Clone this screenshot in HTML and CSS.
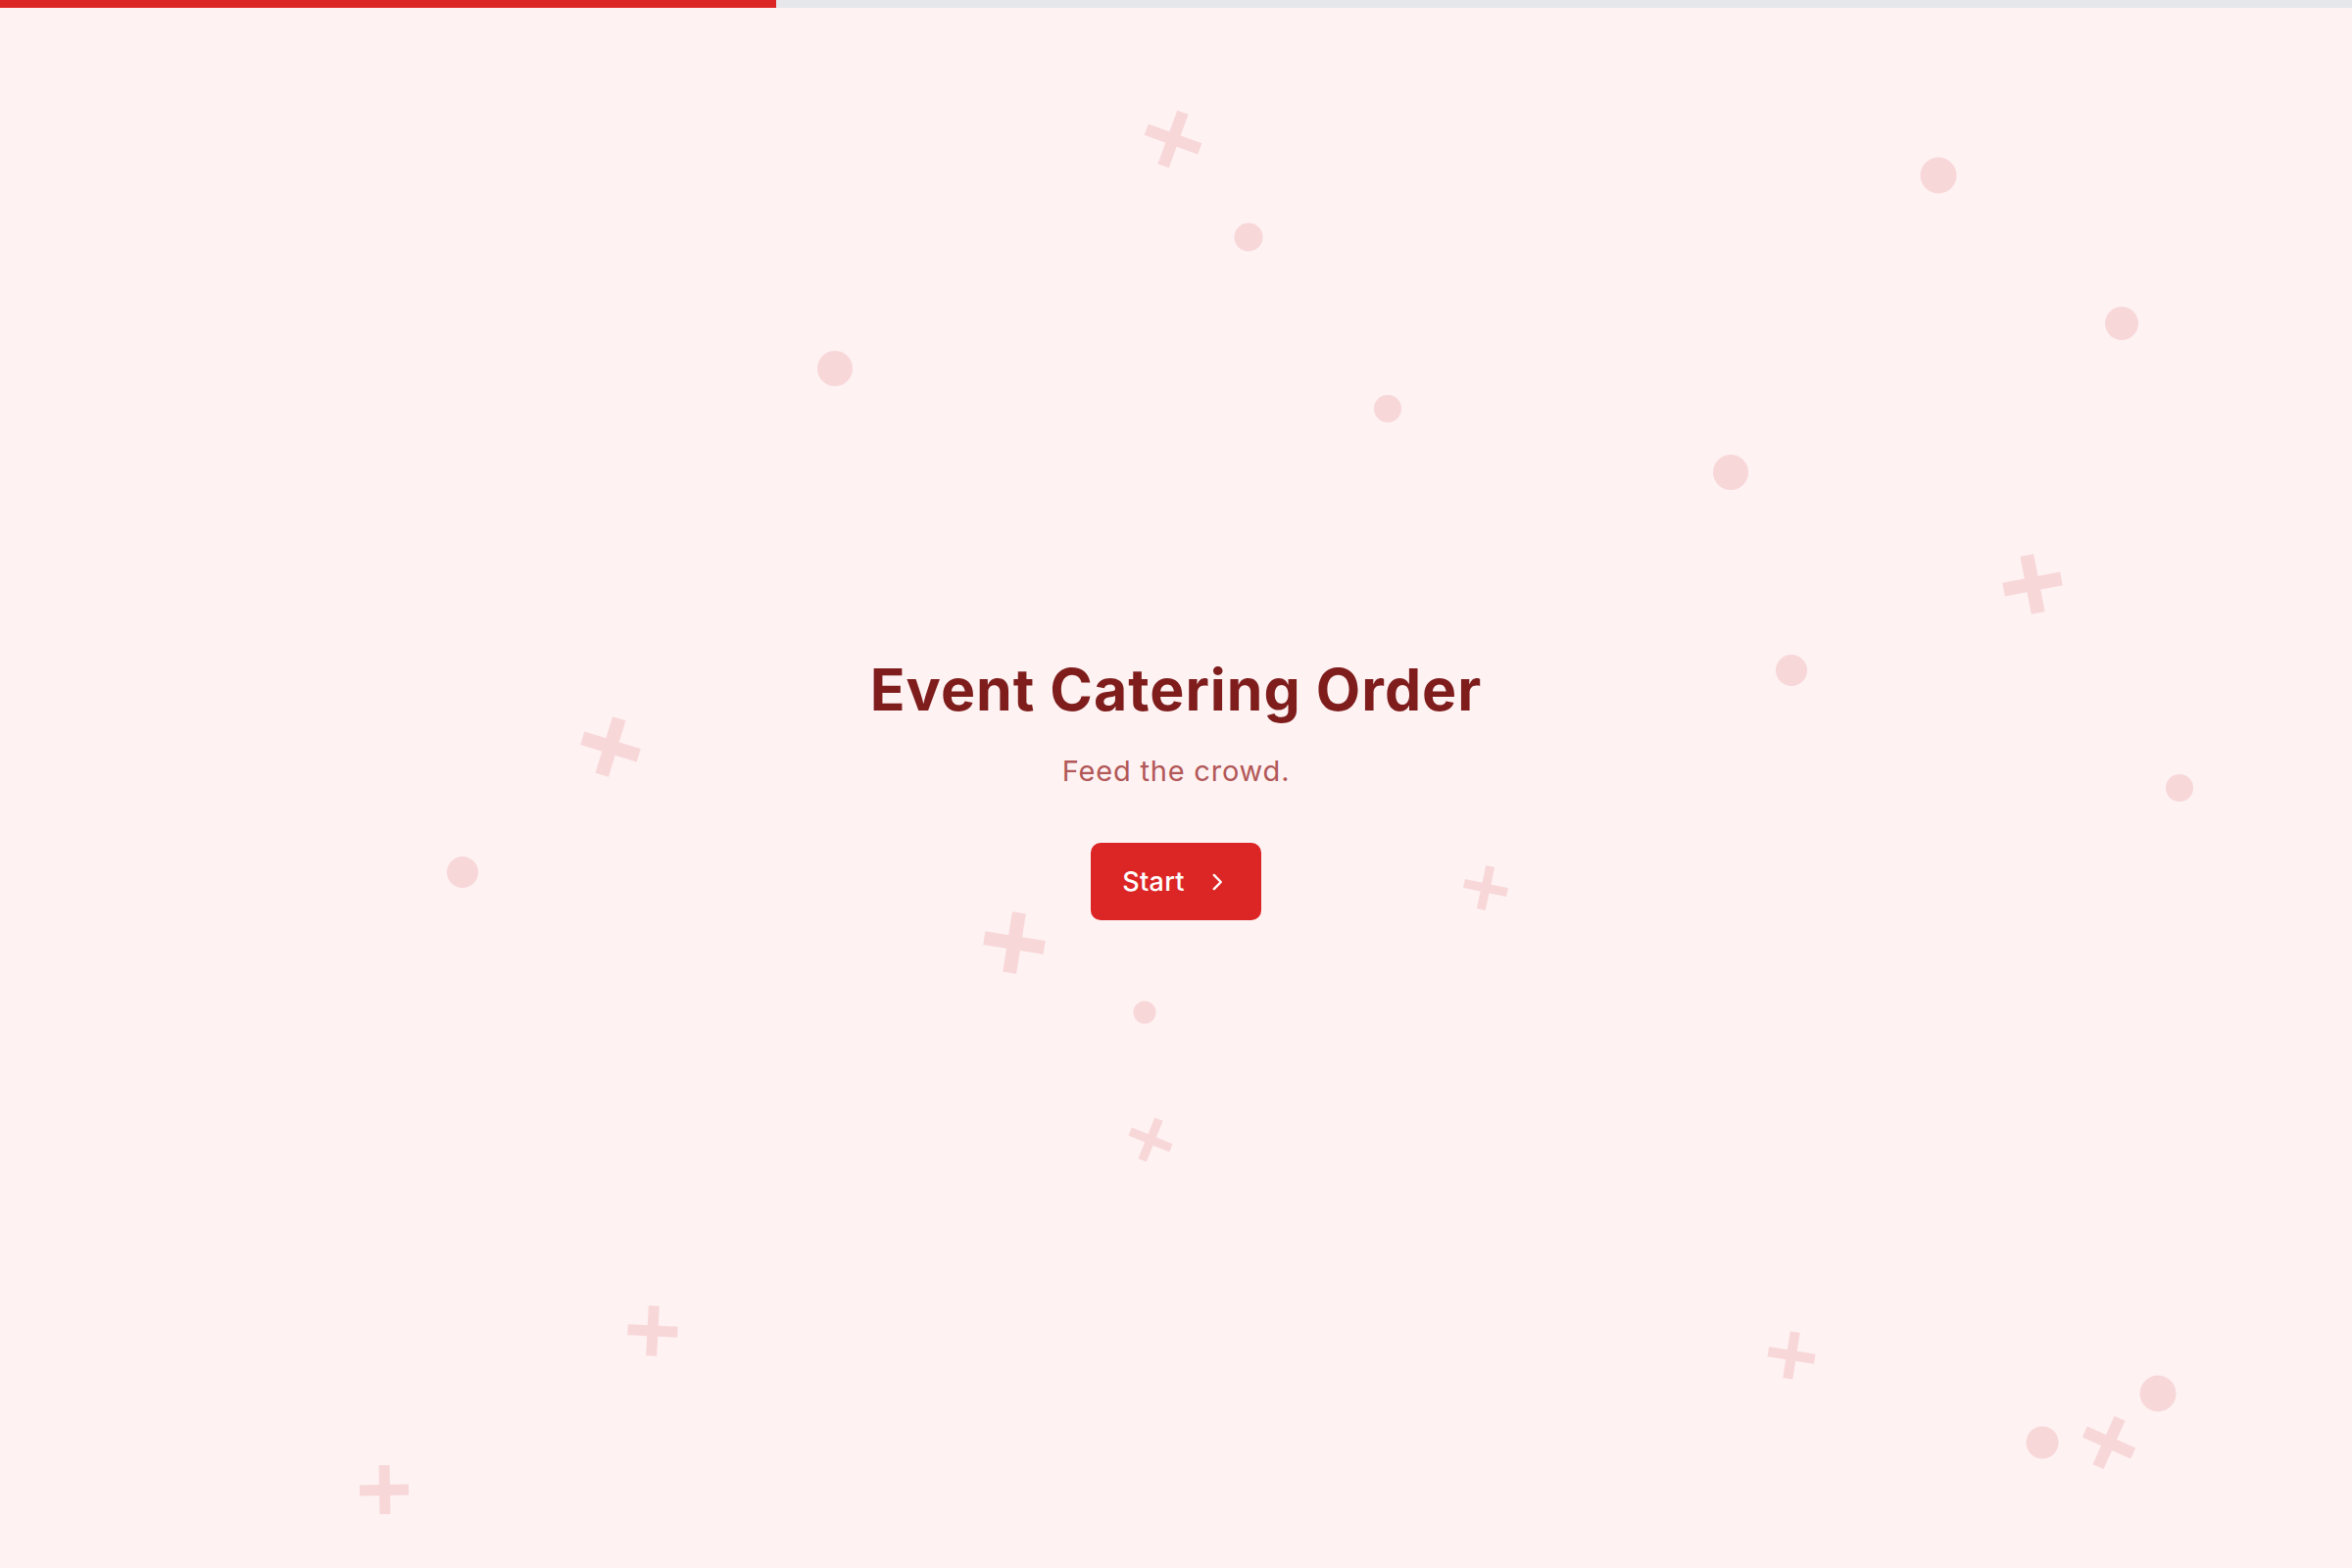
FILE: index.html
```html
<!DOCTYPE html>
<html lang="en">
<head>
<meta charset="utf-8">
<title>Event Catering Order</title>
<link rel="stylesheet" href="styles.css">
</head>
<body>
  <div class="progress"><div class="progress-fill" style="width: 33%"></div></div>

  <div class="confetti" aria-hidden="true">
    <span class="cross" style="--x:1197px;--y:142px;--s:58px;--r:20deg"></span>
    <span class="cross" style="--x:2074px;--y:596px;--s:60px;--r:-11deg"></span>
    <span class="cross" style="--x:623px;--y:762px;--s:60px;--r:17deg"></span>
    <span class="cross" style="--x:1516px;--y:906px;--s:45px;--r:12deg"></span>
    <span class="cross" style="--x:1035px;--y:962px;--s:62px;--r:9deg"></span>
    <span class="cross" style="--x:1174px;--y:1163px;--s:45px;--r:22deg"></span>
    <span class="cross" style="--x:666px;--y:1358px;--s:51px;--r:3deg"></span>
    <span class="cross" style="--x:392px;--y:1520px;--s:50px;--r:-1deg"></span>
    <span class="cross" style="--x:1828px;--y:1383px;--s:48px;--r:9deg"></span>
    <span class="cross" style="--x:2152px;--y:1472px;--s:54px;--r:24deg"></span>

    <span class="dot" style="--x:1274px;--y:242px;--s:29px"></span>
    <span class="dot" style="--x:1978px;--y:179px;--s:37px"></span>
    <span class="dot" style="--x:2165px;--y:330px;--s:34px"></span>
    <span class="dot" style="--x:852px;--y:376px;--s:36px"></span>
    <span class="dot" style="--x:1416px;--y:417px;--s:28px"></span>
    <span class="dot" style="--x:1766px;--y:482px;--s:36px"></span>
    <span class="dot" style="--x:1828px;--y:684px;--s:32px"></span>
    <span class="dot" style="--x:2224px;--y:804px;--s:28px"></span>
    <span class="dot" style="--x:472px;--y:890px;--s:32px"></span>
    <span class="dot" style="--x:1168px;--y:1033px;--s:23px"></span>
    <span class="dot" style="--x:2202px;--y:1422px;--s:37px"></span>
    <span class="dot" style="--x:2084px;--y:1472px;--s:33px"></span>
  </div>

  <main class="intro">
    <h1 class="intro-title">Event Catering Order</h1>
    <p class="intro-subtitle">Feed the crowd.</p>
    <button class="start-button" type="button">
      <span>Start</span>
      <svg class="start-icon" viewBox="0 0 24 24" width="26" height="26" fill="none" stroke="currentColor" stroke-width="2.2" stroke-linecap="round" stroke-linejoin="round"><path d="M9 5.5l6.5 6.5-6.5 6.5"/></svg>
    </button>
  </main>
</body>
</html>
```

FILE: styles.css
```css
* {
  box-sizing: border-box;
}

html,
body {
  margin: 0;
  padding: 0;
}

body {
  min-height: 100vh;
  background: #fef2f2;
  font-family: Inter, "Noto Sans", Roboto, sans-serif;
  color: #7f1d1d;
  overflow: hidden;
  position: relative;
}

/* top progress bar */
.progress {
  height: 8px;
  background: #e5e7eb;
  position: relative;
  z-index: 2;
}

.progress-fill {
  height: 100%;
  background: #dc2626;
}

/* decorative background shapes */
.confetti {
  position: absolute;
  inset: 0;
  pointer-events: none;
  z-index: 0;
}

.cross,
.dot {
  position: absolute;
  left: var(--x);
  top: var(--y);
  width: var(--s);
  height: var(--s);
  transform: translate(-50%, -50%) rotate(var(--r, 0deg));
}

.dot {
  border-radius: 50%;
  background: #f8d7d9;
}

.cross::before,
.cross::after {
  content: "";
  position: absolute;
  background: #f8d7d9;
}

.cross::before {
  left: 0;
  right: 0;
  top: 39%;
  height: 22%;
}

.cross::after {
  top: 0;
  bottom: 0;
  left: 39%;
  width: 22%;
}

/* centered intro */
.intro {
  position: relative;
  z-index: 1;
  min-height: calc(100vh - 8px);
  display: flex;
  flex-direction: column;
  align-items: center;
  justify-content: center;
  text-align: center;
}

.intro-title {
  margin: 0;
  font-size: 59px;
  line-height: 1.2;
  font-weight: 700;
  letter-spacing: 1px;
  color: #7f1d1d;
}

.intro-subtitle {
  margin: 25px 0 0;
  font-size: 29px;
  line-height: 1.5;
  font-weight: 400;
  letter-spacing: 0.8px;
  color: #b25858;
}

.start-button {
  margin-top: 52px;
  height: 79px;
  padding: 0 32px 0 32px;
  display: inline-flex;
  align-items: center;
  gap: 20px;
  border: none;
  border-radius: 10px;
  background: #dc2626;
  color: #ffffff;
  font-family: inherit;
  font-size: 27px;
  font-weight: 500;
  letter-spacing: 0.3px;
  cursor: pointer;
}

.start-icon {
  display: block;
  width: 26px;
  height: 26px;
}
```
